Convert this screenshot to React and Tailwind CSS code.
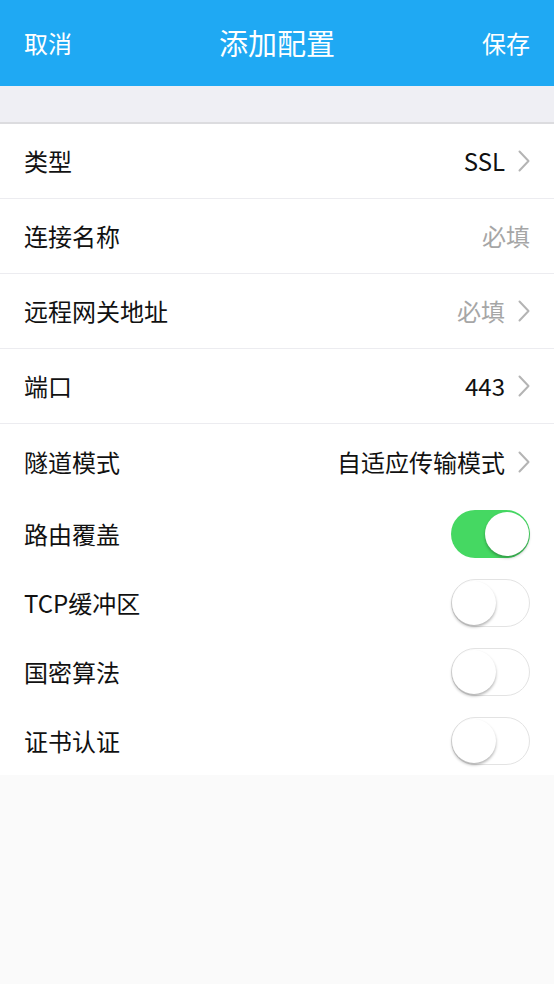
import React from "react";

const font = { fontFamily: '"Noto Sans CJK SC", "Noto Sans", sans-serif' };

function Chevron() {
  return (
    <svg width="12" height="22" viewBox="0 0 12 22" className="ml-[13px] shrink-0">
      <path d="M1.5 1.5 L10.5 11 L1.5 20.5" fill="none" stroke="#b4b4b4" strokeWidth="2" strokeLinecap="round" strokeLinejoin="round" />
    </svg>
  );
}

function Row({ label, value, gray, chevron, divider = true }) {
  return (
    <div className={`flex h-[75px] items-center justify-between pl-[24px] pr-[24px] ${divider ? "border-b border-[#ececf0]" : ""}`}>
      <span className="text-[24px] text-[#111]">{label}</span>
      <div className="flex items-center">
        <span className={`text-[24px] ${gray ? "text-[#a6a6a6]" : "text-[#111]"}`}>{value}</span>
        {chevron && <Chevron />}
      </div>
    </div>
  );
}

function Toggle({ on }) {
  return on ? (
    <div className="relative h-[48px] w-[79px] rounded-full bg-[#45d862]">
      <div className="absolute right-[1px] top-[2px] h-[44px] w-[44px] rounded-full bg-white shadow-[0_2px_3px_rgba(0,0,0,0.3)]" />
    </div>
  ) : (
    <div className="relative h-[48px] w-[79px] rounded-full border border-[#e3e3e3] bg-white">
      <div className="absolute left-0 top-[1px] h-[44px] w-[44px] rounded-full bg-white shadow-[0_2px_3px_rgba(0,0,0,0.3)]" />
    </div>
  );
}

function ToggleRow({ label, on }) {
  return (
    <div className="flex h-[69px] items-center justify-between pl-[24px] pr-[24px]">
      <span className="text-[24px] text-[#111]">{label}</span>
      <Toggle on={on} />
    </div>
  );
}

export default function App() {
  return (
    <div style={font} className="flex h-[984px] w-[554px] flex-col bg-[#fafafa]">
      <div className="flex h-[86px] items-center justify-between bg-[#1fa9f3] px-[24px] text-white">
        <span className="text-[24px]">取消</span>
        <span className="text-[29px]">添加配置</span>
        <span className="text-[24px]">保存</span>
      </div>
      <div className="h-[38px] border-b-2 border-[#dcdcdf] bg-[#efeff4]" />
      <div className="bg-white">
        <Row label="类型" value="SSL" chevron />
        <Row label="连接名称" value="必填" gray />
        <Row label="远程网关地址" value="必填" gray chevron />
        <Row label="端口" value="443" chevron />
        <Row label="隧道模式" value="自适应传输模式" chevron divider={false} />
        <ToggleRow label="路由覆盖" on />
        <ToggleRow label="TCP缓冲区" />
        <ToggleRow label="国密算法" />
        <ToggleRow label="证书认证" />
      </div>
    </div>
  );
}
